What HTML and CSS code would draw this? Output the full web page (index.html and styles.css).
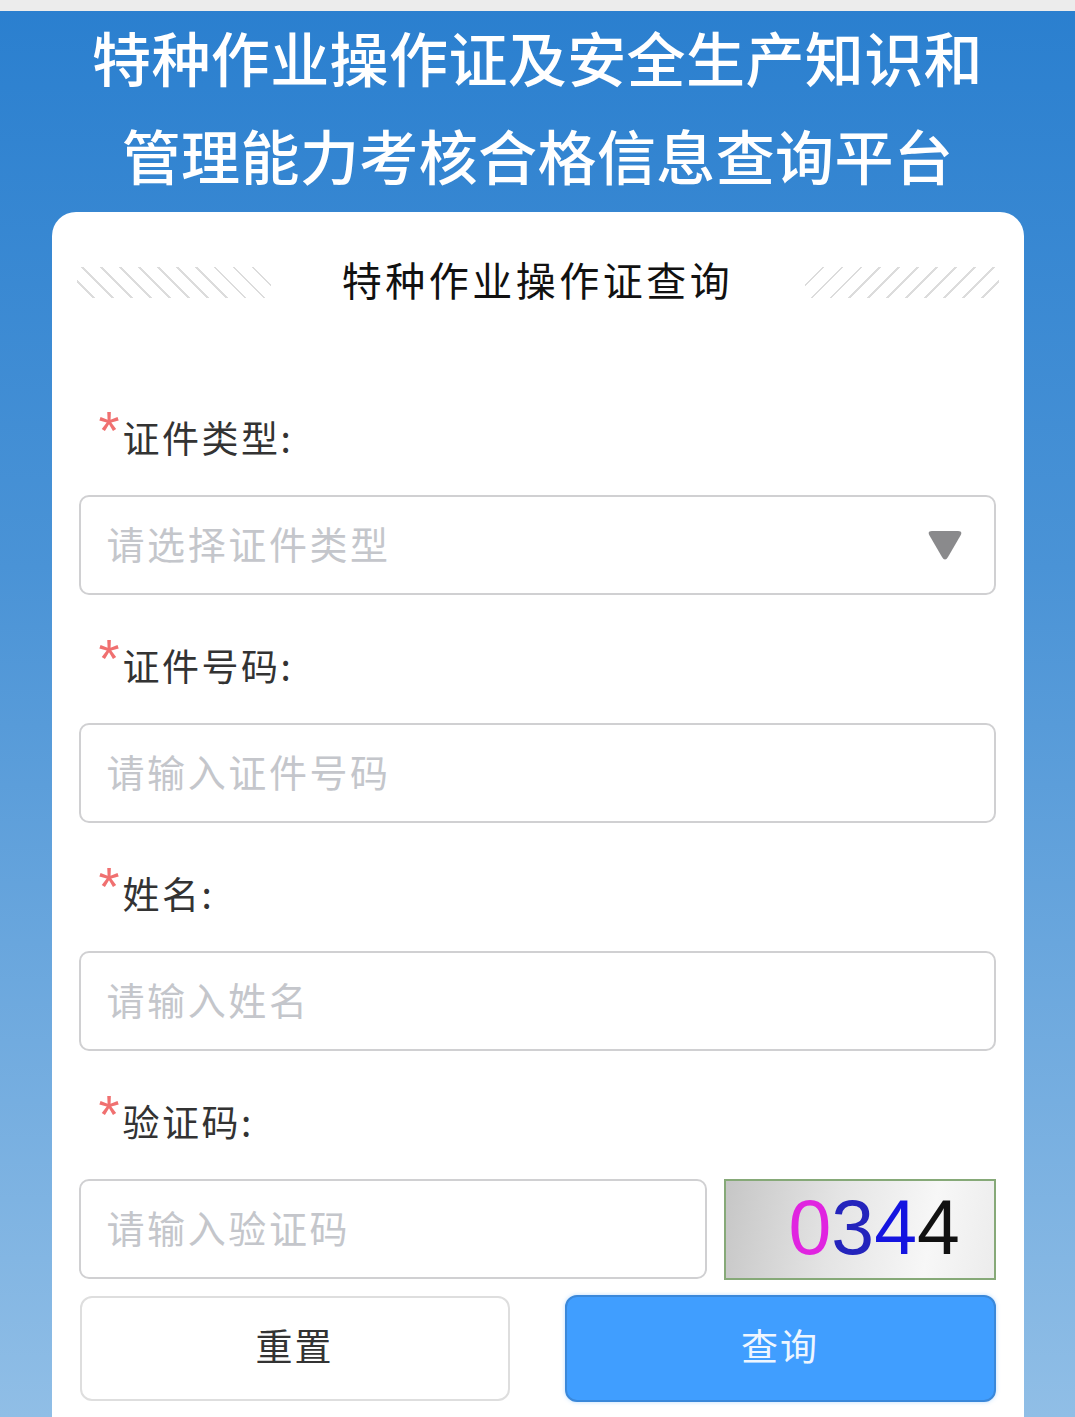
FILE: index.html
```html
<!DOCTYPE html>
<html lang="zh-CN">
<head>
<meta charset="utf-8">
<title>特种作业操作证查询</title>
<link rel="stylesheet" href="styles.css">
</head>
<body>
<div class="topbar"></div>
<div class="page">
  <h1 class="title">特种作业操作证及安全生产知识和<br>管理能力考核合格信息查询平台</h1>
  <div class="card">
    <div class="card-head">
      <span class="hatch hatch-left"></span>
      <span class="card-title">特种作业操作证查询</span>
      <span class="hatch hatch-right"></span>
    </div>
    <form class="form">
      <div class="item">
        <div class="label"><span class="star">*</span><span class="label-text">证件类型:</span></div>
        <div class="field select">
          <span class="placeholder">请选择证件类型</span>
          <svg class="caret" width="38" height="32" viewBox="0 0 38 32"><path d="M6 2 H32 Q37 2 34.5 6.5 L22 28 Q19 33 16 28 L3.5 6.5 Q1 2 6 2 Z" fill="#8a8a8c"/></svg>
        </div>
      </div>
      <div class="item">
        <div class="label"><span class="star">*</span><span class="label-text">证件号码:</span></div>
        <div class="field"><span class="placeholder">请输入证件号码</span></div>
      </div>
      <div class="item">
        <div class="label"><span class="star">*</span><span class="label-text">姓名:</span></div>
        <div class="field"><span class="placeholder">请输入姓名</span></div>
      </div>
      <div class="item">
        <div class="label"><span class="star">*</span><span class="label-text">验证码:</span></div>
        <div class="captcha-row">
          <div class="field grow"><span class="placeholder">请输入验证码</span></div>
          <div class="captcha"><span class="d0">0</span><span class="d1">3</span><span class="d2">4</span><span class="d3">4</span></div>
        </div>
      </div>
      <div class="buttons">
        <div class="btn btn-reset">重置</div>
        <div class="btn btn-query">查询</div>
      </div>
    </form>
  </div>
</div>
</body>
</html>
```
FILE: styles.css
```css
html, body {
  margin: 0;
  padding: 0;
}
body {
  width: 1075px;
  height: 1417px;
  overflow: hidden;
  font-family: "Noto Sans CJK SC", "Noto Sans", sans-serif;
  background: linear-gradient(180deg, #2a7fcf 0%, #4a93d6 40%, #90bee6 100%);
}
.topbar {
  height: 11px;
  background: #ececec;
}
.page {
  display: flex;
  flex-direction: column;
  align-items: center;
}
.title {
  margin: 0;
  color: #fff;
  font-weight: 500;
  font-size: 59px;
  line-height: 98px;
  letter-spacing: 0.4px;
  text-align: center;
  height: 196px;
  margin-bottom: 5px;
  padding-bottom: 0;
  position: relative;
  top: -3px;
}
.card {
  width: 972px;
  height: 1205px;
  background: #fff;
  border-radius: 24px 24px 0 0;
  box-sizing: border-box;
  padding: 40px 25px 0 25px;
}
.card-head {
  height: 60px;
  display: flex;
  align-items: center;
  justify-content: space-between;
}
.card-title {
  font-size: 40px;
  letter-spacing: 3.5px;
  color: #111;
  font-weight: 400;
  padding-bottom: 6px;
}
.hatch {
  width: 194px;
  height: 31px;
}
.hatch-left {
  background: repeating-linear-gradient(45deg, transparent 0 11px, #dcdcdc 11px 13px, transparent 13px 13.4px);
}
.hatch-right {
  background: repeating-linear-gradient(-45deg, transparent 0 11px, #dcdcdc 11px 13px, transparent 13px 13.4px);
}
.form {
  margin: 100px 0 0 0;
  padding: 0 3px 0 2px;
}
.item + .item {
  margin-top: 45px;
}
.label {
  display: flex;
  align-items: flex-start;
  height: 50px;
  padding-left: 20px;
  margin-bottom: 33px;
}
.star {
  color: #f07070;
  font-family: "Liberation Sans", sans-serif;
  font-size: 54px;
  line-height: 44px;
  margin-top: -4px;
  width: 24px;
}
.label-text {
  font-size: 37px;
  line-height: 50px;
  color: #333;
  letter-spacing: 2.5px;
}
.field {
  height: 100px;
  box-sizing: border-box;
  border: 2px solid #d0d0d2;
  border-radius: 10px;
  display: flex;
  align-items: center;
  padding: 0 28px 5px 26px;
}
.placeholder {
  font-size: 38px;
  color: #c4c6cb;
  letter-spacing: 2.6px;
}
.select {
  justify-content: space-between;
}
.caret {
  display: block;
  margin-right: 2px;
  margin-top: 5px;
}
.captcha-row {
  display: flex;
  gap: 17px;
}
.grow {
  flex: 1;
}
.captcha {
  width: 272px;
  height: 101px;
  box-sizing: border-box;
  border: 2px solid #86a978;
  background: linear-gradient(100deg, #c6c6c6 0%, #e4e4e4 40%, #f7f7f7 75%, #ececec 100%);
  font-family: "Liberation Sans", Arial, sans-serif;
  font-size: 77px;
  line-height: 92px;
  padding-left: 63px;
  white-space: nowrap;
}
.d0 { color: #e024e0; }
.d1 { color: #2424bc; }
.d2 { color: #1414e0; }
.d3 { color: #111; }
.buttons {
  display: flex;
  justify-content: space-between;
  margin-top: 16px;
}
.btn {
  width: 430px;
  height: 105px;
  box-sizing: border-box;
  border-radius: 12px;
  display: flex;
  align-items: center;
  justify-content: center;
  font-size: 37px;
  letter-spacing: 2px;
  padding-bottom: 8px;
}
.btn-reset {
  margin-left: 1px;
  border: 2px solid #dedede;
  color: #333;
  background: #fff;
}
.btn-query {
  width: 431px;
  height: 107px;
  margin-top: -1px;
  background: #409eff;
  border: 2px solid #3a88da;
  color: #eef6ff;
  box-shadow: 0 0 4px rgba(64, 158, 255, 0.35);
}
```
